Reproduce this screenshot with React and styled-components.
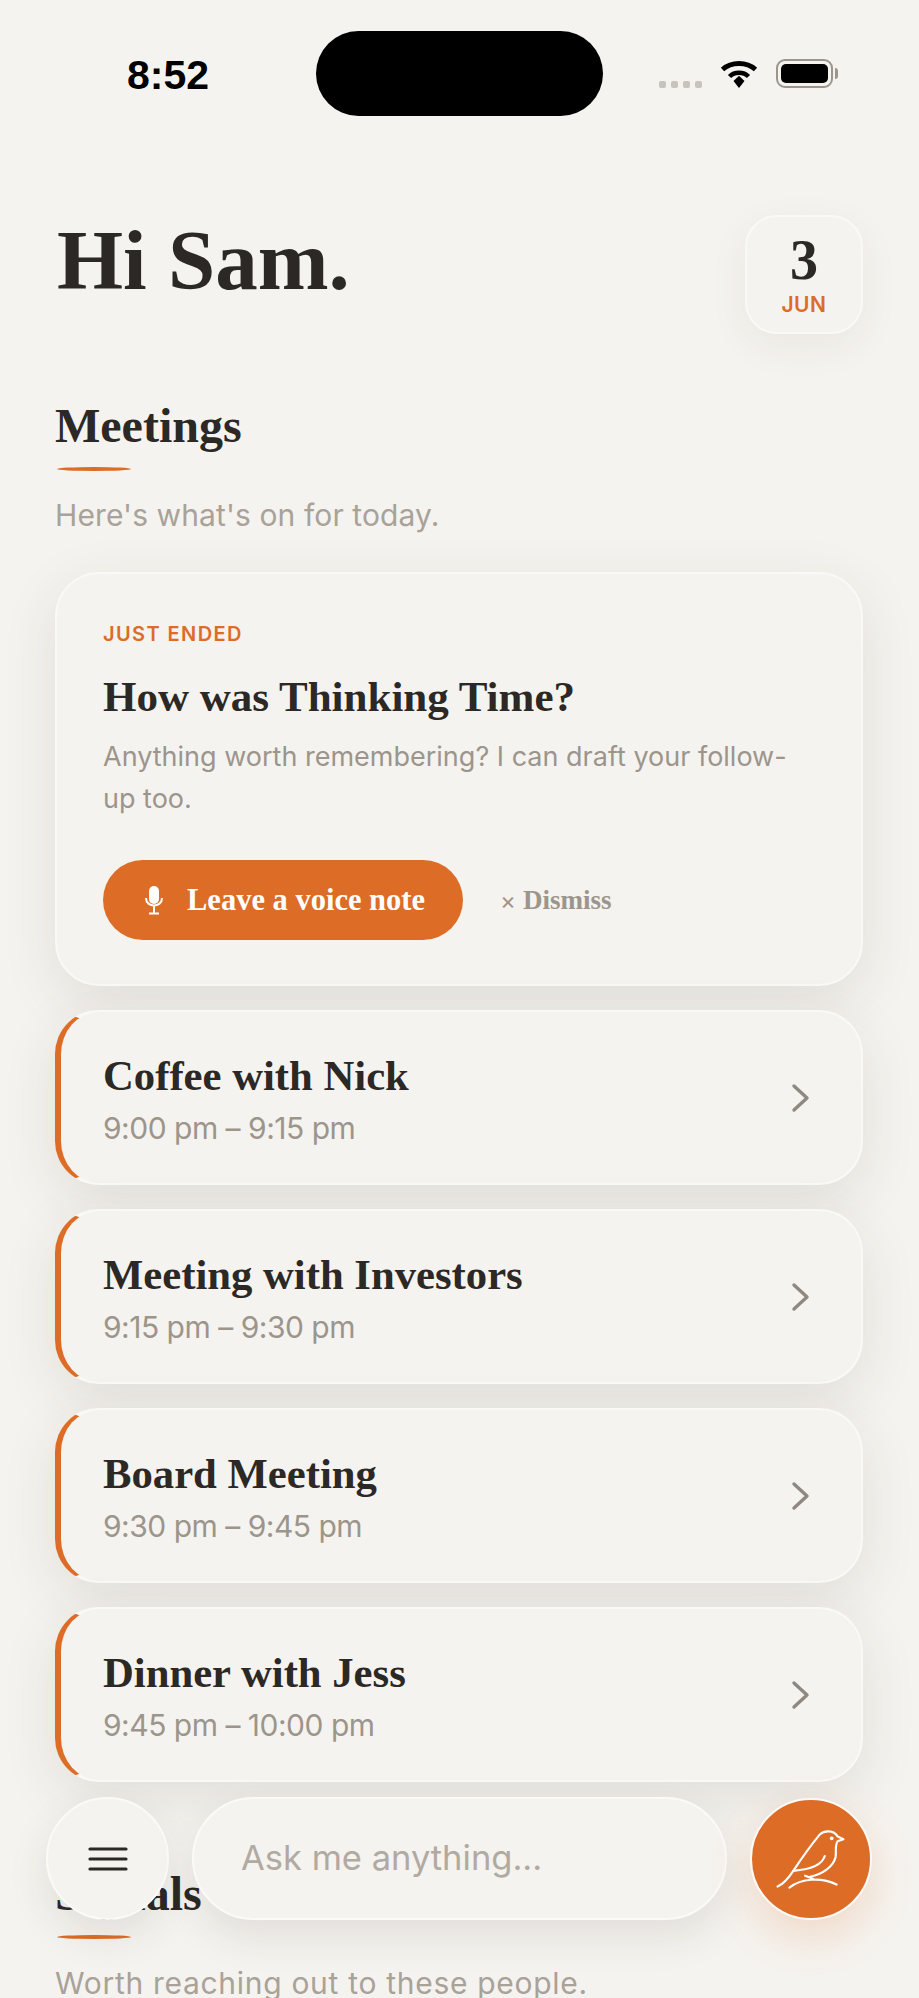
import React from "react";
import styled, { createGlobalStyle } from "styled-components";

const orange = "#dc6c26";
const ink = "#2b2825";
const muted = "#9c958c";
const paper = "#f5f3ef";
const serif = `"Liberation Serif", "Times New Roman", serif`;
const sans = `"Inter", "Noto Sans", sans-serif`;

const GlobalStyle = createGlobalStyle`
  html, body {
    margin: 0;
    height: 100%;
    background: ${paper};
    overflow: hidden;
  }
  * { box-sizing: border-box; }
`;

const Screen = styled.div`
  position: relative;
  width: 919px;
  height: 1998px;
  overflow: hidden;
  background: ${paper};
`;

const StatusBar = styled.div`
  display: grid;
  grid-template-columns: 316px 287px 1fr;
  padding-top: 31px;
  height: 116px;
`;

const Clock = styled.div`
  padding-left: 127px;
  font: 700 41px/1 "Liberation Sans", Arial, sans-serif;
  color: #000;
  margin-top: 24px;
`;

const Island = styled.div`
  height: 85px;
  border-radius: 43px;
  background: #000;
`;

const StatusIcons = styled.div`
  display: flex;
  align-items: flex-start;
  padding: 28px 0 0 56px;
`;

const SignalDots = styled.div`
  display: flex;
  gap: 5px;
  margin: 22px 18px 0 0;
`;

const SignalDot = styled.span`
  width: 7px;
  height: 7px;
  border-radius: 2px;
  background: #c8c4bc;
`;

const Battery = styled.div`
  position: relative;
  width: 57px;
  height: 29px;
  margin-left: 18px;
  padding: 3px;
  border: 2px solid #9c958c;
  border-radius: 9px;

  &::before {
    content: "";
    display: block;
    height: 100%;
    border-radius: 5px;
    background: #000;
  }

  &::after {
    content: "";
    position: absolute;
    right: -7px;
    top: 7px;
    width: 3px;
    height: 11px;
    border-radius: 0 3px 3px 0;
    background: #9c958c;
  }
`;

const Content = styled.main`
  padding: 99px 56px 0 55px;
`;

const Header = styled.header`
  display: flex;
  justify-content: space-between;
  align-items: flex-start;
`;

const Greeting = styled.h1`
  margin: 0;
  padding: 0 0 0 2px;
  font: 700 85px/90px ${serif};
  color: ${ink};
`;

const DateCard = styled.div`
  display: flex;
  flex-direction: column;
  align-items: center;
  width: 118px;
  height: 119px;
  padding-top: 18px;
  border: 2px solid #faf9f7;
  border-radius: 32px;
  background: ${paper};
  box-shadow: 0 12px 40px rgba(60, 50, 40, 0.06);
`;

const DateDay = styled.div`
  font: 700 56px/50px ${serif};
  color: ${ink};
`;

const DateMonth = styled.div`
  margin-top: 8px;
  font: 600 21px/24px ${sans};
  letter-spacing: 0.5px;
  color: ${orange};
`;

const SectionTitle = styled.h2`
  margin: ${(p) => p.$top}px 0 0;
  font: 700 48px/52px ${serif};
  color: ${ink};
`;

const Underline = styled.div`
  width: 74px;
  height: 4px;
  margin: 15px 0 0 2px;
  border-radius: 50%;
  background: ${orange};
`;

const SectionNote = styled.p`
  margin: 24px 0 0;
  font: 400 30px/40px ${sans};
  letter-spacing: ${(p) => p.$spacing || 0}px;
  color: #a8a299;
`;

const Card = styled.section`
  border: 2px solid #faf9f7;
  border-radius: 44px;
  background: ${paper};
  box-shadow: 0 16px 56px rgba(60, 50, 40, 0.1);
`;

const PromptCard = styled(Card)`
  height: 414px;
  margin-top: 37px;
  padding: 47px 46px 0;
`;

const Eyebrow = styled.div`
  font: 600 20px/26px ${sans};
  letter-spacing: 1.4px;
  color: ${orange};
`;

const PromptTitle = styled.h3`
  margin: 24px 0 0;
  font: 700 43px/52px ${serif};
  color: ${ink};
`;

const PromptText = styled.p`
  margin: 13px 0 0;
  width: 700px;
  font: 400 27px/42px ${sans};
  color: ${muted};
`;

const Actions = styled.div`
  display: flex;
  align-items: center;
  margin-top: 40px;
`;

const VoiceButton = styled.button`
  display: flex;
  align-items: center;
  gap: 23px;
  width: 360px;
  height: 80px;
  padding: 0 0 0 41px;
  border: 0;
  border-radius: 40px;
  background: ${orange};
  font: 700 30.5px/1 ${serif};
  color: #fff;
`;

const DismissButton = styled.button`
  margin-left: 37px;
  padding: 0;
  border: 0;
  background: none;
  font: 700 27px/1 ${serif};
  color: ${muted};

  span {
    font: 400 24px/1 ${sans};
    margin-right: 7px;
  }
`;

const MeetingList = styled.div`
  display: flex;
  flex-direction: column;
  gap: 24px;
  margin-top: 24px;
`;

const MeetingRow = styled(Card)`
  display: flex;
  align-items: center;
  justify-content: space-between;
  height: 175px;
  padding: 0 50px 0 42px;
  border-left: 6px solid ${orange};
`;

const MeetingText = styled.div`
  padding-top: 2px;
`;

const MeetingName = styled.div`
  font: 700 42.7px/50px ${serif};
  color: ${ink};
`;

const MeetingTime = styled.div`
  margin-top: 9px;
  font: 400 30px/36px ${sans};
  letter-spacing: -0.5px;
  color: ${muted};
`;

const BottomBar = styled.div`
  position: absolute;
  left: 46px;
  top: 1797px;
  display: flex;
  align-items: center;
`;

const MenuButton = styled.button`
  display: flex;
  align-items: center;
  justify-content: center;
  width: 123px;
  height: 123px;
  padding: 0;
  border: 2px solid #fbfaf8;
  border-radius: 50%;
  background: ${paper};
  box-shadow: 0 16px 40px rgba(60, 50, 40, 0.1);
`;

const AskField = styled.div`
  display: flex;
  align-items: center;
  width: 535px;
  height: 123px;
  margin-left: 23px;
  padding-left: 47px;
  border: 2px solid #fbfaf8;
  border-radius: 62px;
  background: ${paper};
  box-shadow: 0 16px 40px rgba(60, 50, 40, 0.1);
  font: 400 34.5px/1 ${sans};
  color: #b0aaa2;
`;

const BirdButton = styled.button`
  display: flex;
  width: 122px;
  height: 122px;
  margin-left: 23px;
  padding: 0;
  border: 2px solid #fbfaf8;
  border-radius: 50%;
  background: ${orange};
  box-shadow: 0 16px 44px rgba(220, 108, 38, 0.2);
`;

const meetings = [
  { name: "Coffee with Nick", time: "9:00 pm – 9:15 pm" },
  { name: "Meeting with Investors", time: "9:15 pm – 9:30 pm" },
  { name: "Board Meeting", time: "9:30 pm – 9:45 pm" },
  { name: "Dinner with Jess", time: "9:45 pm – 10:00 pm" },
];

const WifiIcon = () => (
  <svg width="38" height="29" viewBox="0 0 38 29" fill="none">
    <path d="M2.5 10.5C11.5 2.5 26.5 2.5 35.5 10.5" stroke="#000" strokeWidth="5" />
    <path d="M9.5 17.5C14.5 12.5 23.5 12.5 28.5 17.5" stroke="#000" strokeWidth="4.5" />
    <path d="M13.5 22L19 16.8 24.5 22 19 29Z" fill="#000" />
  </svg>
);

const Chevron = () => (
  <svg width="20" height="32" viewBox="0 0 20 32" fill="none">
    <path d="M3 4L16 16 3 28" stroke="#8f8880" strokeWidth="3.4" strokeLinecap="round" strokeLinejoin="round" />
  </svg>
);

const MicIcon = () => (
  <svg width="20" height="30" viewBox="0 0 20 30" fill="none">
    <rect x="5" y="1" width="10" height="18" rx="5" fill="#fff" />
    <path d="M2 13c0 10 16 10 16 0M10 21v7M5 28.5h10" stroke="#fff" strokeWidth="2" />
  </svg>
);

const MenuIcon = () => (
  <svg width="40" height="24" viewBox="0 0 40 24" fill="none">
    <path d="M2 2h36M2 12h36M2 22h36" stroke={ink} strokeWidth="3.2" strokeLinecap="round" />
  </svg>
);

const BirdIcon = () => (
  <svg width="118" height="118" viewBox="0 0 120 120" fill="none" stroke="#fff" strokeWidth="2.2" strokeLinecap="round" strokeLinejoin="round">
    <path d="M26 88C33 85 38 78 42 72C50 60 60 46 69 35C73 31 83 30 87 37L93 40L87 42C84 47 86 52 85 58C83 67 73 75 59 78" />
    <path d="M38 89C50 80 70 78 86 86" />
    <path d="M42 72C56 71 71 67 74 57" />
    <path d="M54 77L62 80" />
    <circle cx="81" cy="39" r="0.9" fill="#fff" />
  </svg>
);

export default function App() {
  return (
    <Screen>
      <GlobalStyle />
      <StatusBar>
        <Clock>8:52</Clock>
        <Island />
        <StatusIcons>
          <SignalDots>
            <SignalDot />
            <SignalDot />
            <SignalDot />
            <SignalDot />
          </SignalDots>
          <WifiIcon />
          <Battery />
        </StatusIcons>
      </StatusBar>
      <Content>
        <Header>
          <Greeting>Hi Sam.</Greeting>
          <DateCard>
            <DateDay>3</DateDay>
            <DateMonth>JUN</DateMonth>
          </DateCard>
        </Header>

        <SectionTitle $top={66}>Meetings</SectionTitle>
        <Underline />
        <SectionNote $spacing={0.1}>Here's what's on for today.</SectionNote>

        <PromptCard>
          <Eyebrow>JUST ENDED</Eyebrow>
          <PromptTitle>How was Thinking Time?</PromptTitle>
          <PromptText>Anything worth remembering? I can draft your follow-up too.</PromptText>
          <Actions>
            <VoiceButton>
              <MicIcon />
              Leave a voice note
            </VoiceButton>
            <DismissButton>
              <span>×</span>Dismiss
            </DismissButton>
          </Actions>
        </PromptCard>

        <MeetingList>
          {meetings.map((m) => (
            <MeetingRow key={m.name}>
              <MeetingText>
                <MeetingName>{m.name}</MeetingName>
                <MeetingTime>{m.time}</MeetingTime>
              </MeetingText>
              <Chevron />
            </MeetingRow>
          ))}
        </MeetingList>

        <SectionTitle $top={86}>Signals</SectionTitle>
        <Underline />
        <SectionNote $spacing={0.7}>Worth reaching out to these people.</SectionNote>
      </Content>

      <BottomBar>
        <MenuButton>
          <MenuIcon />
        </MenuButton>
        <AskField>Ask me anything...</AskField>
        <BirdButton>
          <BirdIcon />
        </BirdButton>
      </BottomBar>
    </Screen>
  );
}
